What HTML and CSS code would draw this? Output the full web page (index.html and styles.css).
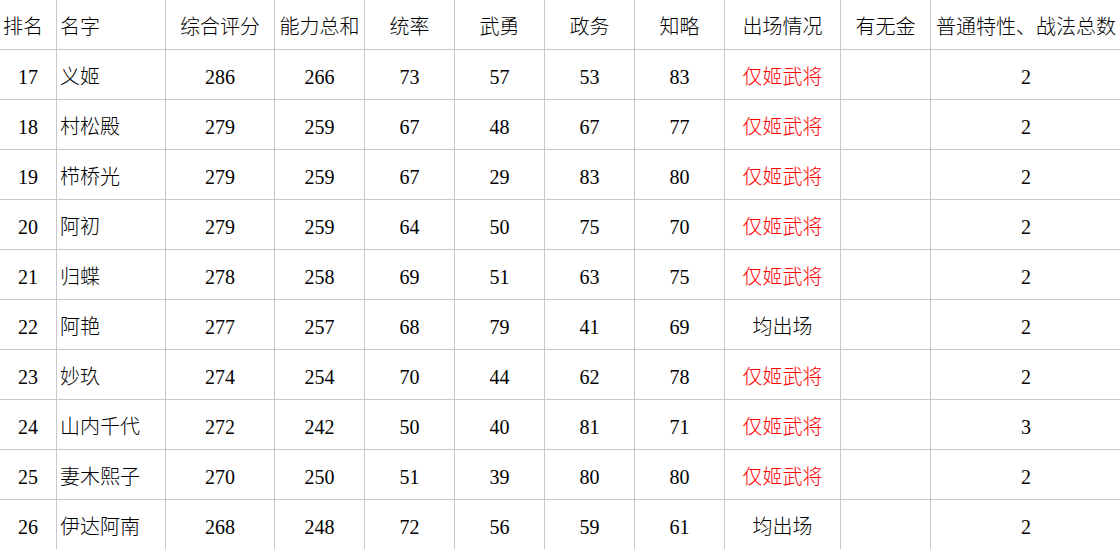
FILE: index.html
```html
<!DOCTYPE html>
<html lang="zh-CN">
<head>
<meta charset="utf-8">
<title>姬武将排名</title>
<link rel="stylesheet" href="styles.css">
</head>
<body>
<div class="sheet">
  <div class="c hd left">排名</div><div class="c hd left">名字</div><div class="c hd">综合评分</div><div class="c hd">能力总和</div><div class="c hd">统率</div><div class="c hd">武勇</div><div class="c hd">政务</div><div class="c hd">知略</div><div class="c hd">出场情况</div><div class="c hd">有无金</div><div class="c hd last">普通特性、战法总数</div>

  <div class="c">17</div><div class="c left">义姬</div><div class="c">286</div><div class="c">266</div><div class="c">73</div><div class="c">57</div><div class="c">53</div><div class="c">83</div><div class="c red">仅姬武将</div><div class="c"></div><div class="c last">2</div>
  <div class="c">18</div><div class="c left">村松殿</div><div class="c">279</div><div class="c">259</div><div class="c">67</div><div class="c">48</div><div class="c">67</div><div class="c">77</div><div class="c red">仅姬武将</div><div class="c"></div><div class="c last">2</div>
  <div class="c">19</div><div class="c left">栉桥光</div><div class="c">279</div><div class="c">259</div><div class="c">67</div><div class="c">29</div><div class="c">83</div><div class="c">80</div><div class="c red">仅姬武将</div><div class="c"></div><div class="c last">2</div>
  <div class="c">20</div><div class="c left">阿初</div><div class="c">279</div><div class="c">259</div><div class="c">64</div><div class="c">50</div><div class="c">75</div><div class="c">70</div><div class="c red">仅姬武将</div><div class="c"></div><div class="c last">2</div>
  <div class="c">21</div><div class="c left">归蝶</div><div class="c">278</div><div class="c">258</div><div class="c">69</div><div class="c">51</div><div class="c">63</div><div class="c">75</div><div class="c red">仅姬武将</div><div class="c"></div><div class="c last">2</div>
  <div class="c">22</div><div class="c left">阿艳</div><div class="c">277</div><div class="c">257</div><div class="c">68</div><div class="c">79</div><div class="c">41</div><div class="c">69</div><div class="c">均出场</div><div class="c"></div><div class="c last">2</div>
  <div class="c">23</div><div class="c left">妙玖</div><div class="c">274</div><div class="c">254</div><div class="c">70</div><div class="c">44</div><div class="c">62</div><div class="c">78</div><div class="c red">仅姬武将</div><div class="c"></div><div class="c last">2</div>
  <div class="c">24</div><div class="c left">山内千代</div><div class="c">272</div><div class="c">242</div><div class="c">50</div><div class="c">40</div><div class="c">81</div><div class="c">71</div><div class="c red">仅姬武将</div><div class="c"></div><div class="c last">3</div>
  <div class="c">25</div><div class="c left">妻木熙子</div><div class="c">270</div><div class="c">250</div><div class="c">51</div><div class="c">39</div><div class="c">80</div><div class="c">80</div><div class="c red">仅姬武将</div><div class="c"></div><div class="c last">2</div>
  <div class="c">26</div><div class="c left">伊达阿南</div><div class="c">268</div><div class="c">248</div><div class="c">72</div><div class="c">56</div><div class="c">59</div><div class="c">61</div><div class="c">均出场</div><div class="c"></div><div class="c last">2</div>
</div>
</body>
</html>
```
FILE: styles.css
```css
html, body {
  margin: 0;
  padding: 0;
  background: #ffffff;
}

body {
  overflow: hidden;
  font-family: "Liberation Serif", "Noto Sans CJK SC", serif;
  font-size: 20px;
  font-weight: 300;
  color: #000000;
}

.sheet {
  display: grid;
  grid-template-columns: 57px 109px 109px 90px 90px 90px 90px 90px 116px 90px 190px;
  grid-auto-rows: 50px;
  width: 1121px;
}

.c {
  box-sizing: border-box;
  border-right: 1px solid #c8c8c8;
  border-bottom: 1px solid #c8c8c8;
  display: flex;
  align-items: center;
  justify-content: center;
  padding-top: 4px;
  white-space: nowrap;
  overflow: visible;
  line-height: 1;
}

.c.left {
  justify-content: flex-start;
  padding-left: 3px;
}

.c.last {
  border-right: none;
}

.c.red {
  color: #ff0000;
}
```
